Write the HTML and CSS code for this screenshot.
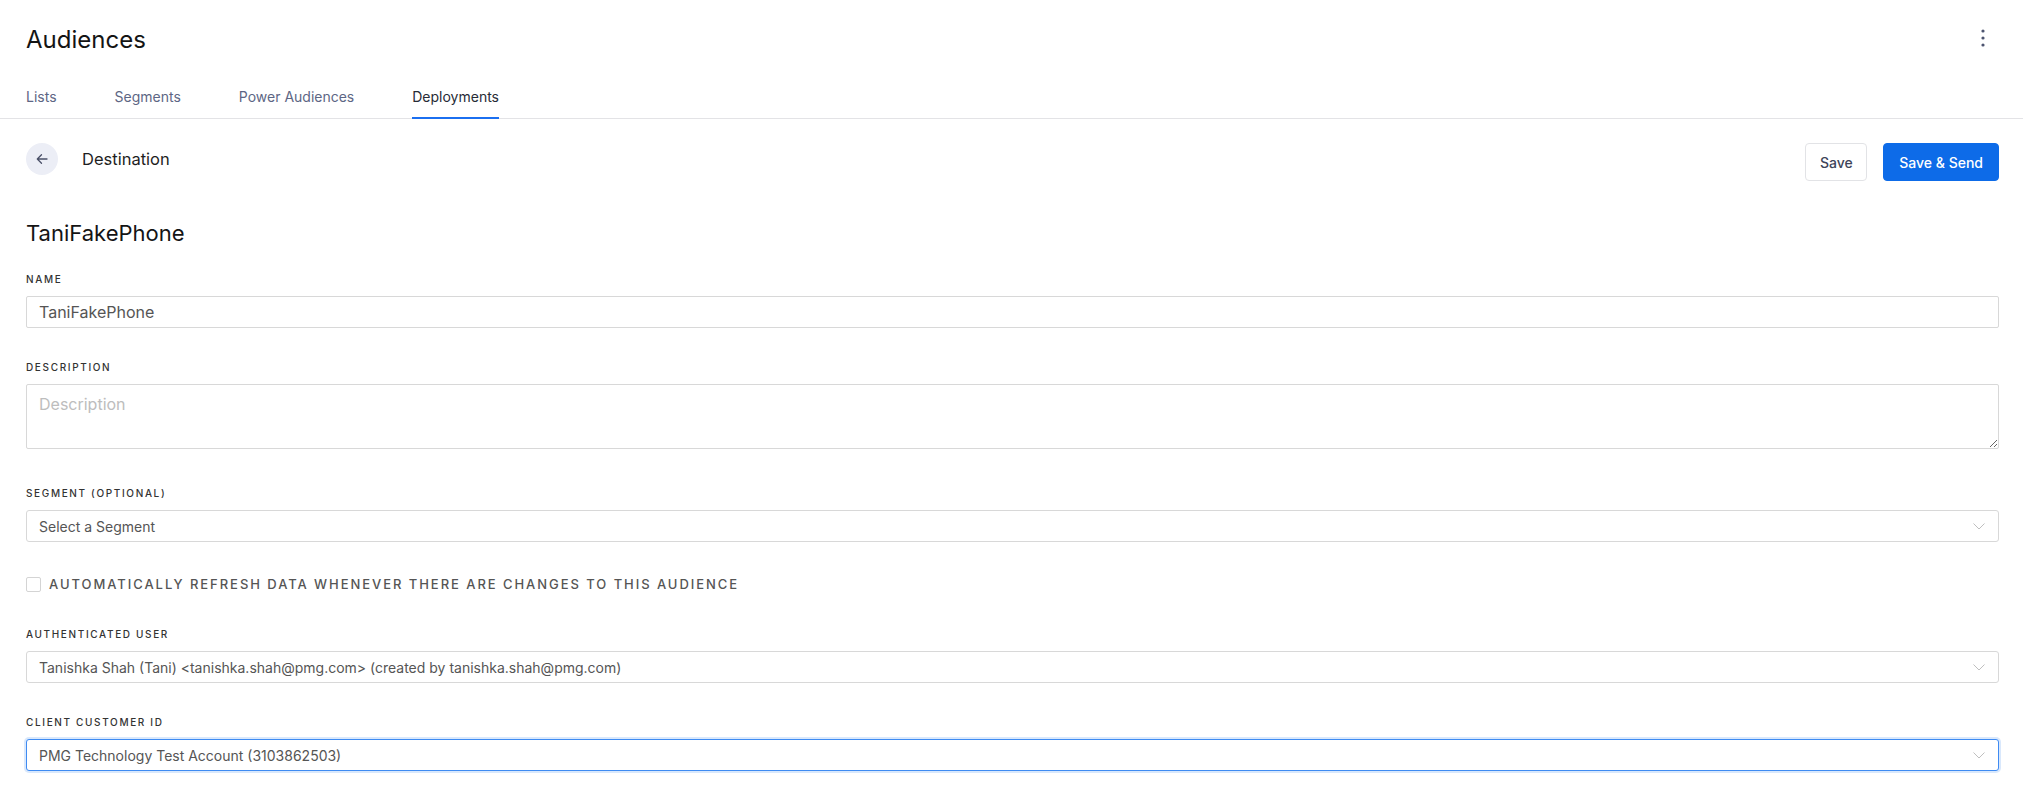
FILE: index.html
```html
<!DOCTYPE html>
<html lang="en">
<head>
<meta charset="utf-8">
<title>Audiences – Destination</title>
<link rel="stylesheet" href="styles.css">
</head>
<body>
<header class="page-header">
  <div class="title-row">
    <h1 class="page-title">Audiences</h1>
    <button class="kebab" type="button" aria-label="More">
      <svg width="4" height="18" viewBox="0 0 4 18"><circle cx="2" cy="2" r="1.6"/><circle cx="2" cy="9" r="1.6"/><circle cx="2" cy="16" r="1.6"/></svg>
    </button>
  </div>
  <nav class="tabs">
    <a class="tab">Lists</a>
    <a class="tab">Segments</a>
    <a class="tab">Power Audiences</a>
    <a class="tab active">Deployments</a>
  </nav>
</header>
<main class="content">
  <div class="toolbar">
    <div class="toolbar-left">
      <button class="back" type="button" aria-label="Back">
        <svg width="12" height="12" viewBox="0 0 12 12"><path d="M11 6H1.5M5.5 1.8L1.3 6l4.2 4.2"/></svg>
      </button>
      <span class="toolbar-title">Destination</span>
    </div>
    <div class="toolbar-actions">
      <button class="btn" type="button">Save</button>
      <button class="btn btn-primary" type="button">Save &amp; Send</button>
    </div>
  </div>

  <h2 class="record-title">TaniFakePhone</h2>

  <div class="field">
    <label class="field-label">Name</label>
    <input class="input" type="text" value="TaniFakePhone">
  </div>

  <div class="field field-desc">
    <label class="field-label">Description</label>
    <textarea class="textarea" placeholder="Description"></textarea>
  </div>

  <div class="field">
    <label class="field-label">Segment (optional)</label>
    <div class="select">
      <span class="select-value">Select a Segment</span>
      <svg class="chevron" width="12" height="7" viewBox="0 0 12 7"><path d="M0.5 0.5L6 6l5.5-5.5"/></svg>
    </div>
  </div>

  <div class="check-row">
    <span class="checkbox"></span>
    <span class="check-label">Automatically refresh data whenever there are changes to this audience</span>
  </div>

  <div class="field">
    <label class="field-label">Authenticated User</label>
    <div class="select">
      <span class="select-value">Tanishka Shah (Tani) &lt;tanishka.shah@pmg.com&gt; (created by tanishka.shah@pmg.com)</span>
      <svg class="chevron" width="12" height="7" viewBox="0 0 12 7"><path d="M0.5 0.5L6 6l5.5-5.5"/></svg>
    </div>
  </div>

  <div class="field">
    <label class="field-label">Client Customer ID</label>
    <div class="select focused">
      <span class="select-value">PMG Technology Test Account (3103862503)</span>
      <svg class="chevron" width="12" height="7" viewBox="0 0 12 7"><path d="M0.5 0.5L6 6l5.5-5.5"/></svg>
    </div>
  </div>
</main>
</body>
</html>
```

FILE: styles.css
```css
* { box-sizing: border-box; }

body {
  margin: 0;
  background: #ffffff;
  font-family: Inter, "Noto Sans", sans-serif;
  color: #222;
}

.page-header {
  padding: 26px 24px 0 26px;
  border-bottom: 1px solid #e3e3e6;
}

.title-row {
  display: flex;
  justify-content: space-between;
  align-items: flex-start;
}

.page-title {
  margin: 0;
  font-size: 24px;
  line-height: 28px;
  font-weight: 400;
  color: #141414;
}

.kebab {
  width: 32px;
  height: 32px;
  margin-top: -4px;
  padding: 0;
  border: 0;
  background: transparent;
  display: flex;
  align-items: center;
  justify-content: center;
}
.kebab svg { fill: #4d5470; }

.tabs {
  display: flex;
  gap: 58px;
  margin-top: 33px;
}

.tab {
  font-size: 14px;
  line-height: 20px;
  color: #5d6684;
  padding-bottom: 10px;
  border-bottom: 2px solid transparent;
  margin-bottom: -1px;
}
.tab.active {
  color: #272b36;
  border-bottom-color: #1b6ff0;
}

.content {
  padding: 24px 24px 40px 26px;
}

.toolbar {
  display: flex;
  justify-content: space-between;
  align-items: flex-start;
}

.toolbar-left {
  display: flex;
  align-items: center;
  gap: 24px;
  height: 32px;
}

.back {
  width: 32px;
  height: 32px;
  border-radius: 50%;
  border: 0;
  padding: 0;
  background: #eceef6;
  display: flex;
  align-items: center;
  justify-content: center;
}
.back svg { fill: none; stroke: #4a5068; stroke-width: 1.3; stroke-linecap: round; stroke-linejoin: round; }

.toolbar-title {
  font-size: 16.5px;
  color: #1e1e1e;
}

.toolbar-actions {
  display: flex;
  gap: 16px;
}

.btn {
  height: 38px;
  padding: 0 13.5px;
  font-family: inherit;
  font-size: 14px;
  font-weight: 500;
  color: #3d4459;
  background: #fff;
  border: 1px solid #e2e3e6;
  border-radius: 4px;
}
.btn-primary {
  padding: 0 15px;
  background: #0d6be8;
  border-color: #0d6be8;
  color: #fff;
}

.record-title {
  margin: 39px 0 26px;
  font-size: 22px;
  line-height: 26px;
  font-weight: 400;
  color: #141414;
}

.field { margin-bottom: 32px; }
.field-desc { margin-bottom: 37px; }

.field-label {
  display: block;
  margin-bottom: 10px;
  font-size: 10px;
  line-height: 14px;
  font-weight: 500;
  letter-spacing: 1.65px;
  text-transform: uppercase;
  color: #333;
}

.input,
.textarea {
  display: block;
  width: 100%;
  font-family: inherit;
  font-size: 16px;
  line-height: 18px;
  color: #555;
  border: 1px solid #d8d8d8;
  border-radius: 2px;
  background: #fff;
  outline: none;
}
.input {
  height: 32px;
  padding: 0 12px;
}
.textarea {
  height: 65px;
  padding: 10px 12px;
  resize: vertical;
}
.textarea::placeholder { color: #bdbdbd; }

.select {
  display: flex;
  align-items: center;
  justify-content: space-between;
  height: 32px;
  padding: 0 13px 0 12px;
  border: 1px solid #d8d8d8;
  border-radius: 3px;
  background: #fff;
}
.select.focused {
  border-color: #3f8bf2;
  box-shadow: 0 0 0 2px rgba(63, 139, 242, 0.2);
}
.select-value {
  font-size: 14px;
  color: #555;
}
.chevron { fill: none; stroke: #bfbfbf; stroke-width: 1; }

.check-row {
  display: flex;
  align-items: center;
  gap: 8px;
  height: 20px;
  margin-bottom: 33px;
}
.checkbox {
  width: 15px;
  height: 15px;
  border: 1px solid #d4d4d4;
  border-radius: 2px;
  background: #fff;
}
.check-label {
  font-size: 13px;
  font-weight: 500;
  letter-spacing: 1.95px;
  text-transform: uppercase;
  color: #555;
}
```
